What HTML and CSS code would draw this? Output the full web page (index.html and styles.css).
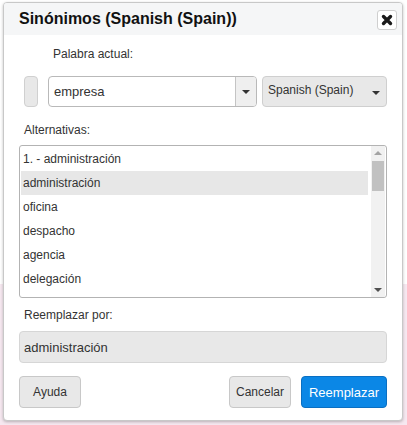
FILE: index.html
```html
<!DOCTYPE html>
<html lang="es">
<head>
<meta charset="utf-8">
<title>Sinónimos</title>
<link rel="stylesheet" href="styles.css">
</head>
<body>
<div class="dialog">
  <div class="header">
    <div class="title">Sinónimos (Spanish (Spain))</div>
    <button class="close" aria-label="Cerrar">
      <svg width="12" height="12" viewBox="0 0 12 12"><path d="M2.5 2.5 L9.5 9.5 M9.5 2.5 L2.5 9.5" stroke="#1a1a1a" stroke-width="3.4" stroke-linecap="round"/></svg>
    </button>
  </div>
  <div class="content">
    <div class="label indent">Palabra actual:</div>
    <div class="row">
      <div class="stub"></div>
      <div class="combo">
        <div class="combo-text">empresa</div>
        <div class="combo-btn"><span class="caret"></span></div>
      </div>
      <div class="select">
        <span>Spanish (Spain)</span>
        <span class="caret"></span>
      </div>
    </div>
    <div class="label pad">Alternativas:</div>
    <div class="list">
      <div class="items">
        <div class="item">1. - administración</div>
        <div class="item sel">administración</div>
        <div class="item">oficina</div>
        <div class="item">despacho</div>
        <div class="item">agencia</div>
        <div class="item">delegación</div>
      </div>
      <div class="scroll">
        <span class="sarrow up"></span>
        <span class="thumb"></span>
        <span class="sarrow down"></span>
      </div>
    </div>
    <div class="label pad lbl-rep">Reemplazar por:</div>
    <div class="field">administración</div>
    <div class="buttons">
      <button class="btn">Ayuda</button>
      <span class="spacer"></span>
      <button class="btn">Cancelar</button>
      <button class="btn primary">Reemplazar</button>
    </div>
  </div>
</div>
</body>
</html>
```
FILE: styles.css
```css
html, body {
  margin: 0;
  padding: 0;
}
body {
  width: 407px;
  height: 425px;
  overflow: hidden;
  background: linear-gradient(to bottom, #ffffff 284px, #f6e8f0 284px);
  font-family: "Liberation Sans", Arial, sans-serif;
  color: #333;
}
.dialog {
  margin: 2px 0 0 3px;
  width: 400px;
  height: 419px;
  box-sizing: border-box;
  border: 1px solid #c8c8c8;
  border-radius: 4px;
  background: #fff;
  box-shadow: 0 1px 3px rgba(0,0,0,0.25);
  overflow: hidden;
}
.header {
  height: 32px;
  background: #f5f6f7;
  display: flex;
  align-items: center;
  justify-content: space-between;
  padding: 0 5px 0 15px;
}
.title {
  font-weight: bold;
  font-size: 16px;
  color: #111;
}
.close {
  width: 20px;
  height: 20px;
  margin-top: 1px;
  padding: 0;
  border: 1px solid #cfcfcf;
  border-radius: 3px;
  background: #fff;
  display: flex;
  align-items: center;
  justify-content: center;
}
.content {
  padding: 12px 15px 0 15px;
}
.label {
  font-size: 12px;
  line-height: 14px;
  height: 14px;
}
.indent { padding-left: 34px; }
.pad { padding-left: 5px; margin-top: 16px; }
.row {
  display: flex;
  margin-top: 15px;
  height: 31px;
}
.stub {
  width: 14px;
  margin-left: 5px;
  box-sizing: border-box;
  border: 1px solid #d0d0d0;
  border-radius: 4px;
  background: #e8e8e8;
}
.combo {
  margin-left: 10px;
  width: 209px;
  box-sizing: border-box;
  border: 1px solid #b9b9b9;
  border-radius: 4px;
  display: flex;
  overflow: hidden;
}
.combo-text {
  flex: 1;
  font-size: 13px;
  padding-left: 5px;
  display: flex;
  align-items: center;
  color: #333;
}
.combo-btn {
  width: 20px;
  border-left: 1px solid #c4c4c4;
  background: #efefef;
  display: flex;
  align-items: center;
  justify-content: center;
}
.caret {
  width: 0;
  height: 0;
  border-left: 4px solid transparent;
  border-right: 4px solid transparent;
  border-top: 4px solid #333;
}
.select {
  margin-left: 5px;
  width: 125px;
  box-sizing: border-box;
  border: 1px solid #cfcfcf;
  border-radius: 4px;
  background: #e8e8e8;
  font-size: 12px;
  display: flex;
  align-items: center;
  justify-content: space-between;
  padding: 0 6px 0 5px;
}
.select span:first-child { margin-top: -3px; }
.select .caret { margin-top: 3px; }
.list {
  margin-top: 8px;
  height: 153px;
  box-sizing: border-box;
  border: 1px solid #b3b3b3;
  border-radius: 3px;
  display: flex;
  overflow: hidden;
}
.items {
  flex: 1;
  padding: 1px 3px 0 1px;
}
.item {
  height: 24px;
  line-height: 24px;
  font-size: 12px;
  padding-left: 2px;
}
.item.sel { background: #e7e7e7; }
.scroll {
  width: 14px;
  margin-right: 1px;
  background: #f1f1f1;
  position: relative;
}
.thumb {
  position: absolute;
  left: 1px;
  right: 1px;
  top: 15px;
  height: 30px;
  background: #c1c1c1;
}
.sarrow {
  position: absolute;
  left: 3px;
  width: 0;
  height: 0;
  border-left: 4px solid transparent;
  border-right: 4px solid transparent;
}
.sarrow.up { top: 5px; border-bottom: 4px solid #a3a3a3; }
.sarrow.down { bottom: 5px; border-top: 4px solid #505050; }
.lbl-rep { margin-top: 10px; }
.field {
  margin-top: 9px;
  height: 32px;
  box-sizing: border-box;
  border: 1px solid #d6d6d6;
  border-radius: 4px;
  background: #e8e8e8;
  font-size: 13px;
  display: flex;
  align-items: center;
  padding-left: 4px;
}
.buttons {
  margin-top: 13px;
  display: flex;
  gap: 10px;
  height: 32px;
}
.spacer { flex: 1; }
.btn {
  height: 32px;
  box-sizing: border-box;
  border: 1px solid #c8c8c8;
  border-radius: 4px;
  background: #e8e8e8;
  font-family: "Liberation Sans", Arial, sans-serif;
  font-size: 12px;
  color: #333;
  padding: 0;
  width: 62px;
}
.btn.primary {
  width: 86px;
  background: #0b87e6;
  border-color: #0a6fc2;
  color: #fff;
  font-size: 13px;
}
```
